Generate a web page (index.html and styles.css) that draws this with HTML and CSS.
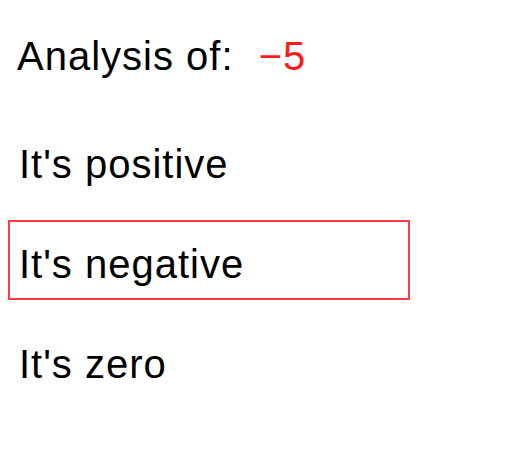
FILE: index.html
```html
<!DOCTYPE html>
<html>
<head>
<meta charset="utf-8">
<link rel="stylesheet" href="styles.css">
</head>
<body>
<div class="app">
  <div class="header">Analysis of: <span class="value">−5</span></div>
  <div class="list">
    <div class="item">It's positive</div>
    <div class="item selected">It's negative</div>
    <div class="item">It's zero</div>
  </div>
</div>
</body>
</html>
```
FILE: styles.css
```css
html, body {
  margin: 0;
  padding: 0;
  background: #ffffff;
}
body {
  font-family: "Liberation Sans", Arial, sans-serif;
  font-size: 40px;
  letter-spacing: 1px;
  color: #000000;
}
.app {
  padding: 34px 8px 0 8px;
}
.header {
  padding-left: 9px;
  line-height: 44px;
}
.value {
  color: #ff1a1a;
  margin-left: 13px;
}
.list {
  display: flex;
  flex-direction: column;
  gap: 20px;
  margin-top: 42px;
}
.item {
  box-sizing: border-box;
  width: 402px;
  height: 80px;
  border: 2px solid transparent;
  padding: 20px 6px 12px 9px;
  line-height: 44px;
}
.item.selected {
  border-color: #ff3a46;
}
```
